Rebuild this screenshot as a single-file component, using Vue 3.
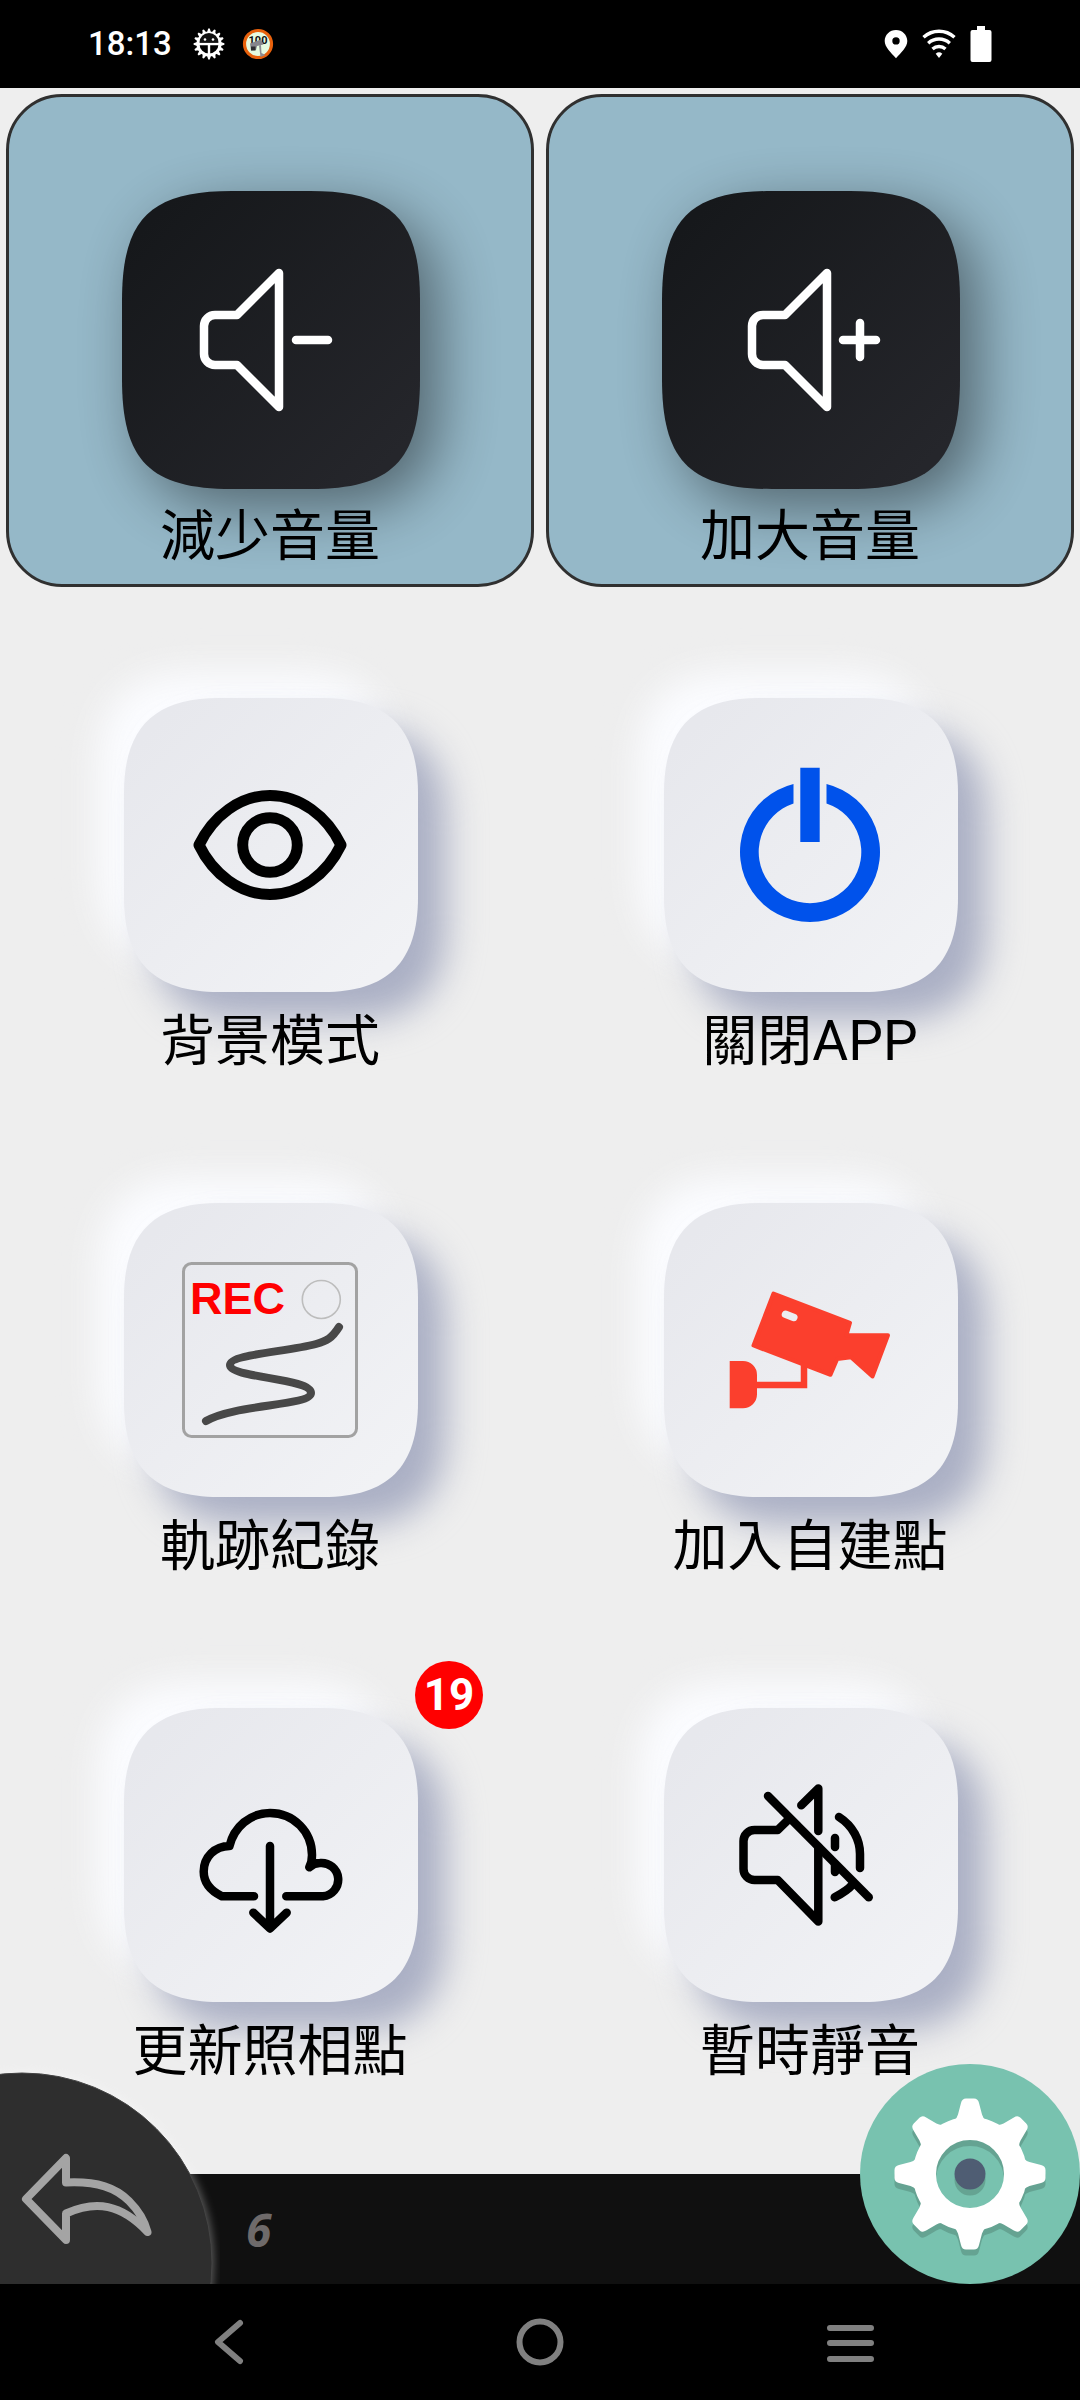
<script setup>
import { ref } from 'vue'

// Smooth-cornered square centred in the 298-unit tile canvas.
// reach: how far each corner curve runs along the edge, pull: its control handle
function smoothSquare(half, reach, pull) {
  const a = 149 - half
  const b = 149 + half
  return [
    `M${a + reach} ${a}H${b - reach}`,
    `C${b - pull} ${a} ${b} ${a + pull} ${b} ${a + reach}V${b - reach}`,
    `C${b} ${b - pull} ${b - pull} ${b} ${b - reach} ${b}H${a + reach}`,
    `C${a + pull} ${b} ${a} ${b - pull} ${a} ${b - reach}V${a + reach}`,
    `C${a} ${a + pull} ${a + pull} ${a} ${a + reach} ${a}Z`,
  ].join('')
}

const darkShape = smoothSquare(149, 110, 28)
const lightShape = smoothSquare(147, 95, 30)

const actions = ref([
  { id: 'volume-down', label: '減少音量', dark: true },
  { id: 'volume-up', label: '加大音量', dark: true },
  { id: 'background', label: '背景模式' },
  { id: 'power', label: '關閉APP' },
  { id: 'record', label: '軌跡紀錄' },
  { id: 'camera', label: '加入自建點' },
  { id: 'update', label: '更新照相點', badge: 19 },
  { id: 'mute', label: '暫時靜音' },
])

const teeth = [0, 45, 90, 135, 180, 225, 270, 315]
const cogs = Array.from({ length: 16 }, (_, i) => i * 22.5)
</script>

<template>
  <div class="screen">
    <header class="status">
      <div class="status-group">
        <time class="clock">18:13</time>
        <svg class="status-icon" viewBox="0 0 32 32" aria-hidden="true">
          <g fill="#fff">
            <path v-for="a in cogs" :key="a" d="M13.8 5 15.2 .6h1.6L18.2 5z" :transform="`rotate(${a} 16 16)`" />
          </g>
          <circle cx="16" cy="16" r="11" fill="#000" stroke="#fff" stroke-width="3" />
          <path d="M5 16h22M16 16v12" stroke="#fff" stroke-width="2.4" />
          <path d="M6.500 14.500a9.500 9.500 0 0 1 19 0z" fill="#111" />
          <circle cx="12" cy="11.500" r="1.300" fill="#fff" />
          <circle cx="20" cy="11.500" r="1.300" fill="#fff" />
        </svg>
        <svg class="status-icon" viewBox="0 0 32 32" aria-hidden="true">
          <circle cx="16" cy="16" r="13.500" fill="#e6fbe0" stroke="#e8610c" stroke-width="3.200" />
          <text x="16" y="16" text-anchor="middle" class="limit">100</text>
          <path d="M8 15.500 19 11.500l2.500 5-6.500 1.500-1 4-5 .5z" fill="#85858c" />
          <path d="M9 18.500h4.500v4H9z" fill="#2c2c30" />
          <path d="M17 17.500 18.500 29l5-2-4-2-.5-8z" fill="#8d8d94" />
        </svg>
      </div>
      <div class="status-group status-right">
        <svg class="pin" viewBox="0 0 24 30" aria-hidden="true">
          <path fill="#fff" fill-rule="evenodd" d="M12 1C5.800 1 .700 5.900.700 12c0 6 6 11.500 11.300 17.200C17.300 23.500 23.300 18 23.300 12 23.300 5.900 18.200 1 12 1zm0 7.200a3.700 3.700 0 1 1 0 7.400 3.700 3.700 0 0 1 0-7.400z" />
        </svg>
        <svg class="wifi" viewBox="0 0 34 30" aria-hidden="true">
          <g fill="none" stroke="#fff" stroke-width="3.400">
            <path d="M1.500 8.200a23 23 0 0 1 31 0" />
            <path d="M6.200 14.200a16 16 0 0 1 21.600 0" />
            <path d="M10.500 20a9.800 9.800 0 0 1 13 0" />
          </g>
          <path fill="#fff" d="M17 29l-3.300-4.200a5 5 0 0 1 6.600 0z" />
        </svg>
        <svg class="battery" viewBox="0 0 22 36" aria-hidden="true">
          <path fill="#fff" d="M7 0h8v4h4.500A2 2 0 0 1 21.500 6v28a2 2 0 0 1-2 2h-17a2 2 0 0 1-2-2V6a2 2 0 0 1 2-2H7z" />
        </svg>
      </div>
    </header>

    <main class="grid">
      <button
        v-for="action in actions"
        :key="action.id"
        type="button"
        class="cell"
        :class="{ active: action.dark }"
      >
        <span class="tile">
          <svg class="art" viewBox="-1 0 298 298" aria-hidden="true">
            <defs>
              <linearGradient :id="`fill-${action.id}`" x1="0" y1="0" x2="1" y2="1">
                <stop offset="0.1" :stop-color="action.dark ? '#16181b' : '#e7e8ed'" />
                <stop offset="0.9" :stop-color="action.dark ? '#25262b' : '#f1f2f5'" />
              </linearGradient>
            </defs>

            <template v-if="action.dark">
              <path class="shade-dark" :d="darkShape" />
              <path :d="darkShape" :fill="`url(#fill-${action.id})`" />
            </template>
            <template v-else>
              <path class="shade-white" :d="lightShape" />
              <path class="shade-blue" :d="lightShape" />
              <path :d="lightShape" :fill="`url(#fill-${action.id})`" />
            </template>

            <g v-if="action.id === 'volume-down'" class="line white">
              <path d="M157 82 115 124H93a11 11 0 0 0-11 11v28a11 11 0 0 0 11 11h22l42 42z" />
              <path d="M174 149h32" />
            </g>

            <g v-else-if="action.id === 'volume-up'" class="line white">
              <path d="M165 82 123 124h-22a11 11 0 0 0-11 11v28a11 11 0 0 0 11 11h22l42 42z" />
              <path d="M181 149h33M198 132v34" />
            </g>

            <g v-else-if="action.id === 'background'" class="line thick">
              <path d="M77 149C91 120 118 99.500 148 99.500S205 120 219 149C205 178 178 198.500 148 198.500S91 178 77 149z" />
              <circle cx="148" cy="149" r="27.300" />
            </g>

            <g v-else-if="action.id === 'power'" fill="#0052eb">
              <path d="M131.500 88A70 70 0 1 0 164.500 88V107.400A51.300 51.300 0 1 1 131.500 107.400z" />
              <path d="M138.300 71.700h19.400V146h-19.400z" />
            </g>

            <g v-else-if="action.id === 'record'">
              <rect x="61.500" y="62.500" width="173" height="173" rx="8" fill="none" stroke="#a2a2a2" stroke-width="3" />
              <text x="68" y="113" class="rec">REC</text>
              <circle cx="199.300" cy="98.500" r="19" fill="none" stroke="#bdbdbd" stroke-width="1.600" />
              <path d="M217 126C210 137 205 140 194 143 165 151 108 153 108 164 108 177 189 177 189 192 189 205 113 203 84 220" fill="none" stroke="#484848" stroke-width="8" stroke-linecap="round" />
            </g>

            <g v-else-if="action.id === 'camera'" fill="#fb3f2d">
              <path d="M111.500 92.500 188 121.800 184.400 134.300H226L210.500 175.500 189 156.300 175.200 158 168.500 173.800 91.500 144.500z" stroke="#fb3f2d" stroke-width="4" stroke-linejoin="round" />
              <path d="M142 164v20H92" fill="none" stroke="#fb3f2d" stroke-width="6.500" />
              <path d="M67.700 160H81a14 14 0 0 1 14 14v19.300a14 14 0 0 1-14 14H67.700z" />
              <path d="M123.500 113.300l8.300 3.200" stroke="#ecedf1" stroke-width="7.500" stroke-linecap="round" />
            </g>

            <g v-else-if="action.id === 'update'" class="line">
              <path d="M132 190.300H100C88 184.500 81.700 176 81.700 165.500 81.700 151 93 140 107.500 140 112 121 128 107 148 107 172 107 190 126 190 149Q190 156 187.300 161.300 192 157 198 157A16.700 16.700 0 0 1 201 190.300H164.300" />
              <path d="M148 140v82M131.300 206.700 148 222.500 164.700 206.700" />
            </g>

            <g v-else class="line">
              <path d="M106 90 206.700 191.300" />
              <path d="M126 114 115.700 124H92.500a11 11 0 0 0-11 11v28a11 11 0 0 0 11 11h23.200L156.300 215.500V141" />
              <path d="M139.300 99.300 156.300 82.500V125" />
              <path d="M173 132v9M173 158v8" />
              <path d="M177 111C191 120 198 134 198 148v14" />
              <path d="M172.700 191.300C180 187.500 186 184 190.500 178.500" />
            </g>
          </svg>
          <span v-if="action.badge" class="badge">{{ action.badge }}</span>
        </span>
        <span class="label">{{ action.label }}</span>
      </button>
    </main>

    <footer class="dock">
      <button type="button" class="corner back" aria-label="返回">
        <svg viewBox="0 0 220 220" aria-hidden="true">
          <circle class="halo" cx="22" cy="199" r="192" />
          <circle cx="22" cy="199" r="190" fill="#2e2e2e" stroke="#444" stroke-width="1" />
          <path d="M26 135 66 94V118.500C98 117 116 124 129 137 139 147 145 158 147.500 168 121 140 96 136 66 149.500V176z" fill="none" stroke="#a4a4a4" stroke-width="8" stroke-linejoin="round" />
        </svg>
      </button>
      <output class="count">6</output>
      <button type="button" class="corner settings" aria-label="設定">
        <svg viewBox="0 0 220 220" aria-hidden="true">
          <circle cx="110" cy="110" r="110" fill="#78c2af" />
          <g v-for="layer in ['shadow', 'face']" :key="layer" :class="['gear', layer]">
            <circle cx="110" cy="110" r="45.500" fill="none" stroke="currentColor" stroke-width="23" />
            <path
              v-for="a in teeth"
              :key="a"
              fill="currentColor"
              :transform="`rotate(${a} 110 110)`"
              d="M88 60 94.500 56Q97 54 98 50.500L101 39Q102 34.500 106 34.500H114Q118 34.500 119 39L122 50.500Q123 54 125.500 56L132 60z"
            />
            <circle cx="110" cy="110" r="15.500" :fill="layer === 'face' ? '#4f5d73' : 'currentColor'" />
          </g>
        </svg>
      </button>
    </footer>

    <nav class="system">
      <button type="button" aria-label="Back">
        <svg viewBox="0 0 50 50" aria-hidden="true"><path d="M36 6 14 25 36 44" stroke-linejoin="round" stroke-linecap="round" /></svg>
      </button>
      <button type="button" aria-label="Home">
        <svg viewBox="0 0 50 50" aria-hidden="true"><circle cx="25" cy="25" r="20.500" /></svg>
      </button>
      <button type="button" aria-label="Menu">
        <svg viewBox="0 0 50 50" aria-hidden="true"><path d="M4 11h41M4 26h41M4 42h41" stroke-linecap="round" /></svg>
      </button>
    </nav>
  </div>
</template>

<style>
body {
  margin: 0;
  background: #000;
}
</style>

<style scoped>
.screen {
  display: flex;
  flex-direction: column;
  min-height: 100vh;
  background: #eee;
  font-family: Roboto, "Noto Sans CJK TC", sans-serif;
  color: #000;
}

button {
  margin: 0;
  padding: 0;
  border: 0;
  background: none;
  color: inherit;
  font: inherit;
  cursor: pointer;
}

svg {
  display: block;
}

.status {
  display: flex;
  align-items: center;
  justify-content: space-between;
  height: 88px;
  padding: 0 88px;
  box-sizing: border-box;
  background: #000;
  color: #fff;
}

.status-group {
  display: flex;
  align-items: center;
  gap: 17px;
}

.status-right {
  gap: 14px;
}

.clock {
  margin-right: 4px;
  font-size: 33px;
  font-weight: 500;
  line-height: 40px;
}

.status-icon {
  width: 32px;
  height: 32px;
}

.limit {
  font: 700 11px Roboto, sans-serif;
  fill: #111;
}

.pin {
  width: 24px;
  height: 30px;
}

.wifi {
  width: 34px;
  height: 30px;
}

.battery {
  width: 22px;
  height: 36px;
}

.grid {
  flex: 1;
  display: grid;
  grid-template-columns: 1fr 1fr;
  align-content: start;
  gap: 12px;
  padding: 6px;
}

.cell {
  display: flex;
  flex-direction: column;
  align-items: center;
  height: 493px;
  padding-top: 94px;
  box-sizing: border-box;
  border: 3px solid transparent;
  border-radius: 56px;
}

.cell.active {
  border-color: #303030;
  background: #95b8c8;
}

.tile {
  position: relative;
  display: block;
  width: 298px;
  height: 298px;
}

.art {
  width: 100%;
  height: 100%;
  overflow: visible;
}

.shade-dark {
  fill: #000;
  opacity: 0.45;
  transform: translate(18px, 18px);
  filter: blur(30px);
}

.shade-white {
  fill: #fbfcff;
  transform: translate(-26px, -26px);
  filter: blur(18px);
}

.shade-blue {
  fill: #aaafc4;
  transform: translate(28px, 28px);
  filter: blur(18px);
}

.line {
  fill: none;
  stroke: #000;
  stroke-width: 8.5;
  stroke-linecap: round;
  stroke-linejoin: round;
}

.line.white {
  stroke: #fff;
}

.line.thick {
  stroke-width: 11;
}

.rec {
  font: 700 45px "Liberation Sans", sans-serif;
  fill: #f00;
}

.badge {
  position: absolute;
  top: -45px;
  left: 294px;
  width: 68px;
  height: 68px;
  border-radius: 50%;
  background: #f00;
  color: #fff;
  font-size: 44px;
  font-weight: 700;
  line-height: 68px;
  text-align: center;
}

.label {
  position: relative;
  margin-top: 15px;
  font-size: 55px;
  line-height: 64px;
  white-space: nowrap;
}

.dock {
  position: relative;
  display: flex;
  align-items: center;
  height: 110px;
  padding-left: 246px;
  background: #101010;
}

.count {
  font: italic 700 46px/64px "Noto Sans", sans-serif;
  color: #6e6a6a;
}

.corner {
  position: absolute;
  bottom: 0;
  width: 220px;
  height: 220px;
}

.corner svg {
  width: 100%;
  height: 100%;
  overflow: hidden;
}

.back {
  left: 0;
}

.halo {
  fill: #fff;
  opacity: 0.3;
  filter: blur(4px);
}

.settings {
  right: 0;
}

.gear.shadow {
  color: #65a392;
  transform: translateY(6px);
}

.gear.face {
  color: #fff;
}

.system {
  display: grid;
  grid-template-columns: repeat(3, 1fr);
  height: 116px;
  padding: 0 74px;
  background: #000;
}

.system button {
  display: flex;
  align-items: center;
  justify-content: center;
}

.system svg {
  width: 50px;
  height: 50px;
  fill: none;
  stroke: #808080;
  stroke-width: 6;
}
</style>
